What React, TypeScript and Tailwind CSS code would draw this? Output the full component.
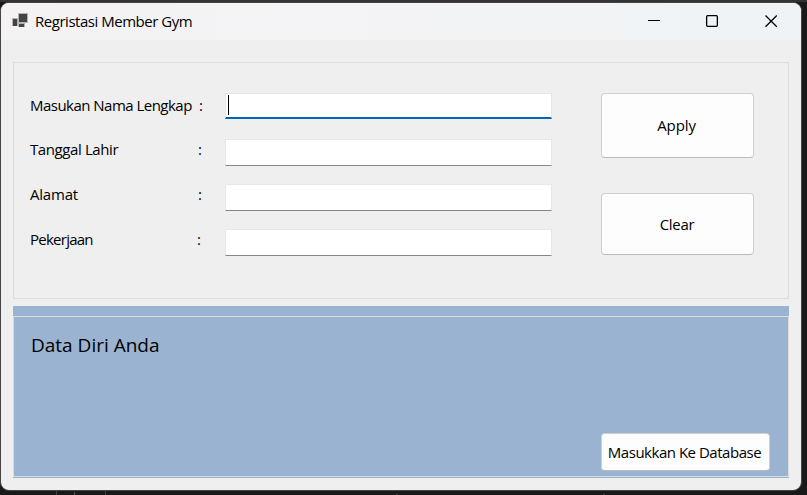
const fields = [
  { label: 'Masukan Nama Lengkap', labelClass: 'w-[169px] tracking-[-0.52px]', row: 'mt-[30px] h-[26px]', text: 'pb-px', focused: true },
  { label: 'Tanggal Lahir', labelClass: 'w-[168px] tracking-[-0.4px]', row: 'mt-5 h-[27px]', text: 'pb-[7px]', focused: false },
  { label: 'Alamat', labelClass: 'w-[168px] tracking-[-0.2px]', row: 'mt-[18px] h-[27px]', text: 'pb-[7px]', focused: false },
  { label: 'Pekerjaan', labelClass: 'w-[167px] tracking-[-0.75px]', row: 'mt-[18px] h-[27px]', text: 'pb-[7px]', focused: false },
];

function AppIcon() {
  return (
    <svg className="mb-[2px]" width="16" height="15" viewBox="0 0 16 15" shapeRendering="crispEdges">
      <g fill="#b4b4b4">
        <path d="M6 0h10v10H6zM0 5h6v8H0zM6 10h7v4H6z" />
      </g>
      <g fill="#444444">
        <path d="M7 1h8v8H7zM1 6h4v7H1zM7 11h5v3H7z" />
      </g>
    </svg>
  );
}

function TitleBar() {
  return (
    <header className="flex h-[37px] items-center bg-linear-to-r from-[#f4f2f3] via-[#f3f3f5] to-[#eff3f5] pl-[11px]">
      <AppIcon />
      <h1 className="ml-[7px] flex-1 whitespace-nowrap text-[15px] tracking-[-0.47px]">Regristasi Member Gym</h1>
      <div className="flex items-center gap-[46px] pr-[23px]">
        <svg width="12" height="13" viewBox="0 0 12 13"><path d="M0 5.5h12" stroke="#000" /></svg>
        <svg width="13" height="13" viewBox="0 0 13 13" fill="none"><rect x=".65" y=".65" width="10.7" height="10.7" rx="1" stroke="#000" strokeWidth="1.3" /></svg>
        <svg width="13" height="13" viewBox="0 0 13 13"><path d="M.5.5l11.3 11.3M11.8.5L.5 11.8" stroke="#000" strokeWidth="1.25" /></svg>
      </div>
    </header>
  );
}

function PushButton({ label, className }: { label: string; className: string }) {
  return (
    <button className={`flex items-center justify-center whitespace-nowrap rounded-[4px] border border-[#d0d0d0] border-b-[#bbbbbb] bg-[#fdfdfd] text-[15px] ${className}`}>
      {label}
    </button>
  );
}

export default function App() {
  return (
    <div className="h-[495px] w-[807px] overflow-hidden bg-[#191919] font-['Open_Sans','Noto_Sans',sans-serif] text-black">
      <div className="h-[2px] bg-[#343233]" />
      <div className="h-[489px] w-[802px] overflow-hidden rounded-[9px] border border-[#444444] bg-[#efefef]">
        <TitleBar />
        <main className="px-3 pt-[22px]">
          <section className="flex h-[237px] w-[776px] border border-[#dcdcdc] pl-4">
            <div className="w-[523px]">
              {fields.map((f) => (
                <div key={f.label} className={`flex ${f.row}`}>
                  <div className={`flex w-[195px] items-center whitespace-nowrap text-[15px] ${f.text}`}>
                    <span className={f.labelClass}>{f.label}</span>
                    <span>:</span>
                  </div>
                  <div className={f.focused ? 'w-[327px] border border-b-2 border-[#e4e7e9] border-b-[#0067b8] bg-white pl-[2px] pt-px' : 'w-[327px] border border-[#e8e8e8] border-b-[#868686] bg-white'}>
                    {f.focused && <div className="h-5 w-px bg-black" />}
                  </div>
                </div>
              ))}
            </div>
            <div className="ml-12 flex flex-col gap-[35px] pt-[30px]">
              <PushButton label="Apply" className="h-[65px] w-[153px] pr-[2px] tracking-[-0.1px]" />
              <PushButton label="Clear" className="h-[62px] w-[153px] pr-px pt-px tracking-[-0.3px]" />
            </div>
          </section>
          <section className="mt-[7px] h-[172px] w-[776px] bg-[#99b3d1] pt-[10px]">
            <div className="flex h-[161px] flex-col justify-between border border-[#dcdcdc] pb-[5px] pl-[17px] pr-[18px] pt-[15px]">
              <h2 className="text-[19px] leading-[26px]">Data Diri Anda</h2>
              <PushButton label="Masukkan Ke Database" className="h-[38px] w-[169px] self-end pr-[2px] tracking-[-0.48px]" />
            </div>
          </section>
        </main>
      </div>
      <div className="flex h-1 items-end">
        <i className="ml-14 h-full w-px bg-[#444444]" />
        <i className="ml-[17px] h-[3px] w-px bg-[#555555]" />
        <i className="ml-[30px] h-full w-px bg-[#444444]" />
        <i className="ml-[290px] h-px w-[2px] bg-[#444444]" />
        <i className="ml-[205px] h-px w-[2px] bg-[#444444]" />
      </div>
    </div>
  );
}
